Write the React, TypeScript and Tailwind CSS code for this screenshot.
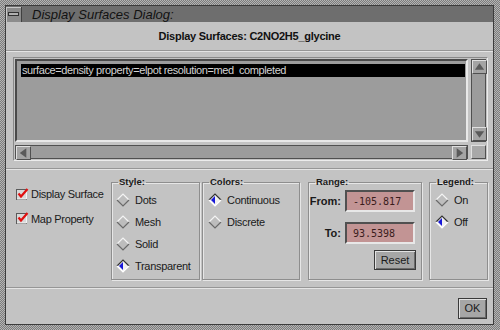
import React from "react";

const font = { fontFamily: '"Liberation Sans", Arial, sans-serif' };

function Diamond({ on }: { on?: boolean }) {
  return (
    <svg width="14" height="14" viewBox="0 0 14 14" className="shrink-0">
      {on ? (
        <>
          <polygon points="7,1 13,7 7,13 1,7" fill="#f0f0f0" />
          <polygon points="7,3 7,11 3,7" fill="#1818d8" />
          <polyline points="1,7 7,1 13,7" fill="none" stroke="#303030" strokeWidth="1.2" />
          <polyline points="1,7 7,13 13,7" fill="none" stroke="#ffffff" strokeWidth="1.2" />
        </>
      ) : (
        <>
          <polygon points="7,1 13,7 7,13 1,7" fill="#bdbdbd" />
          <polyline points="1,7 7,1 13,7" fill="none" stroke="#f4f4f4" strokeWidth="1.2" />
          <polyline points="1,7 7,13 13,7" fill="none" stroke="#6a6a6a" strokeWidth="1.2" />
        </>
      )}
    </svg>
  );
}

function Check() {
  return (
    <svg width="13" height="13" viewBox="0 0 13 13" className="shrink-0">
      <rect x="0.5" y="1.5" width="10" height="10" fill="#d8d8d8" stroke="#5a5a5a" />
      <line x1="1" y1="11" x2="10.5" y2="11" stroke="#f4f4f4" />
      <line x1="10.5" y1="2" x2="10.5" y2="11" stroke="#f4f4f4" />
      <path d="M2.5 5.5 L5 8.5 L11.5 1" fill="none" stroke="#e01010" strokeWidth="2.2" />
    </svg>
  );
}

function Radio({ on, label }: { on?: boolean; label: string }) {
  return (
    <div className="flex h-[22px] items-center gap-[5px]">
      <Diamond on={on} />
      <span className="text-[11px] tracking-[-0.3px] text-[#1a1a1a]">{label}</span>
    </div>
  );
}

function Group({ title, className, inner, children }: { title: string; className: string; inner: string; children: React.ReactNode }) {
  return (
    <fieldset className={`border border-[#8e8e8e] shadow-[inset_1px_1px_0_#e6e6e6,1px_1px_0_#e6e6e6] ${className}`}>
      <legend className="ml-[6px] px-[1px] text-[9.5px] font-bold leading-[10px] text-[#1a1a1a]">{title}</legend>
      <div className={inner}>{children}</div>
    </fieldset>
  );
}

function Arrow({ dir }: { dir: "up" | "down" | "left" | "right" }) {
  const pts =
    dir === "up" ? "7,3 12,10 2,10" : dir === "down" ? "2,4 12,4 7,11" : dir === "left" ? "10,2 10,12 3,7" : "4,2 4,12 11,7";
  return (
    <div className="flex h-[14px] w-[15px] items-center justify-center border border-t-[#e0e0e0] border-l-[#e0e0e0] border-b-[#505050] border-r-[#505050] bg-[#a4a4a4]">
      <svg width="14" height="14" viewBox="0 0 14 14">
        <polygon points={pts} fill="#5a5a5a" />
      </svg>
    </div>
  );
}

function Input({ value }: { value: string }) {
  return (
    <div
      className="flex h-[22px] w-[70px] items-center border-2 border-t-[#505050] border-l-[#505050] border-b-[#e8e8e8] border-r-[#e8e8e8] bg-[#c29494] pl-[6px] text-[#3a1c1c]"
      style={{ fontFamily: '"DejaVu Sans Mono", "Liberation Mono", monospace', fontSize: 10 }}
    >
      {value}
    </div>
  );
}

function Btn({ label, className }: { label: string; className: string }) {
  return (
    <div className={`flex items-center justify-center border border-[#3a3a3a] bg-[#a6a6a6] shadow-[inset_1px_1px_0_#e2e2e2,inset_-1px_-1px_0_#6a6a6a] text-[11px] text-[#1a1a1a] ${className}`}>
      {label}
    </div>
  );
}

export default function App() {
  return (
    <div
      className="h-[330px] w-[500px] bg-[repeating-conic-gradient(#7c7c7c_0_25%,#b4b4b4_0_50%)] bg-[length:2px_2px] pb-[5px] pl-[5px] pr-[6px] pt-[5px]"
      style={font}
    >
      <div className="flex h-full w-full flex-col border border-[#3c3c3c] bg-[#c3c3c3]">
        {/* title bar */}
        <div className="flex h-[16px] shrink-0 items-center bg-[#6e6e6e]">
          <div className="flex h-[15px] w-[16px] items-center justify-center border-r border-[#404040] bg-[#8c8c8c] shadow-[inset_1px_1px_0_#c8c8c8]">
            <div className="h-[4px] w-[11px] border border-[#303030] bg-[#b0b0b0]" />
          </div>
          <span className="ml-[10px] text-[13px] italic leading-none text-[#121212]">Display Surfaces Dialog:</span>
        </div>

        {/* heading */}
        <div className="flex h-[29px] shrink-0 items-center justify-center border-b border-[#969696] text-[11px] font-bold tracking-[-0.25px] text-[#111]">
          Display Surfaces: C2NO2H5_glycine
        </div>
        <div className="h-px shrink-0 bg-[#e4e4e4]" />

        {/* list */}
        <div className="ml-[7px] mr-[5px] mt-[5px] grid h-[104px] shrink-0 grid-cols-[1fr_15px] grid-rows-[1fr_14px] gap-x-[3px] gap-y-[3px] border border-t-[#8a8a8a] border-l-[#8a8a8a] border-b-[#ececec] border-r-[#ececec] p-px">
          <div className="border-2 border-t-[#4a4a4a] border-l-[#4a4a4a] border-b-[#e8e8e8] border-r-[#e8e8e8] bg-[#9c9c9c] pl-[4px] pr-[1px] pt-[3px]">
            <div className="flex h-[13px] items-center whitespace-pre bg-black pl-px text-[11px] tracking-[-0.4px] text-[#d4d4d4]">
              surface=density property=elpot resolution=med  completed
            </div>
          </div>
          <div className="flex flex-col justify-between border border-[#505050] bg-[#9c9c9c]">
            <Arrow dir="up" />
            <Arrow dir="down" />
          </div>
          <div className="flex justify-between border border-[#505050] bg-[#9c9c9c]">
            <Arrow dir="left" />
            <Arrow dir="right" />
          </div>
          <div className="border border-t-[#e0e0e0] border-l-[#e0e0e0] border-b-[#505050] border-r-[#505050] bg-[#a8a8a8]" />
        </div>

        <div className="mt-[7px] h-px shrink-0 bg-[#969696]" />
        <div className="h-px shrink-0 bg-[#e4e4e4]" />

        {/* options */}
        <div className="flex h-[117px] shrink-0 items-start pl-[10px] pt-[7px]">
          <div className="flex w-[95px] flex-col gap-[8px] pt-[9px]">
            <div className="flex items-center gap-[2px]">
              <Check />
              <span className="text-[11px] tracking-[-0.3px] text-[#1a1a1a]">Display Surface</span>
            </div>
            <div className="flex items-center gap-[2px]">
              <Check />
              <span className="text-[11px] tracking-[-0.3px] text-[#1a1a1a]">Map Property</span>
            </div>
          </div>
          <Group title="Style:" className="h-[103px] w-[89px]" inner="pl-[4px] pt-[2px]">
            <Radio label="Dots" />
            <Radio label="Mesh" />
            <Radio label="Solid" />
            <Radio on label="Transparent" />
          </Group>
          <Group title="Colors:" className="ml-[2px] h-[103px] w-[98px]" inner="pl-[5px] pt-[2px]">
            <Radio on label="Continuous" />
            <Radio label="Discrete" />
          </Group>
          <Group title="Range:" className="ml-[8px] h-[103px] w-[114px]" inner="pt-[3px]">
            <div className="flex flex-col items-end gap-[10px] pr-[6px]">
              <div className="flex items-center gap-[4px]">
                <span className="text-[11px] font-bold text-[#1a1a1a]">From:</span>
                <Input value="-105.817" />
              </div>
              <div className="flex items-center gap-[4px]">
                <span className="text-[11px] font-bold text-[#1a1a1a]">To:</span>
                <Input value="93.5398" />
              </div>
              <Btn label="Reset" className="-mt-[4px] mr-[-1px] h-[20px] w-[42px]" />
            </div>
          </Group>
          <Group title="Legend:" className="ml-[7px] h-[103px] w-[59px]" inner="pl-[5px] pt-[2px]">
            <Radio label="On" />
            <Radio on label="Off" />
          </Group>
        </div>

        <div className="h-px shrink-0 bg-[#969696]" />
        <div className="h-px shrink-0 bg-[#e4e4e4]" />

        <div className="flex flex-1 items-start justify-end pr-[6px] pt-[9px]">
          <Btn label="OK" className="h-[21px] w-[29px]" />
        </div>
      </div>
    </div>
  );
}
